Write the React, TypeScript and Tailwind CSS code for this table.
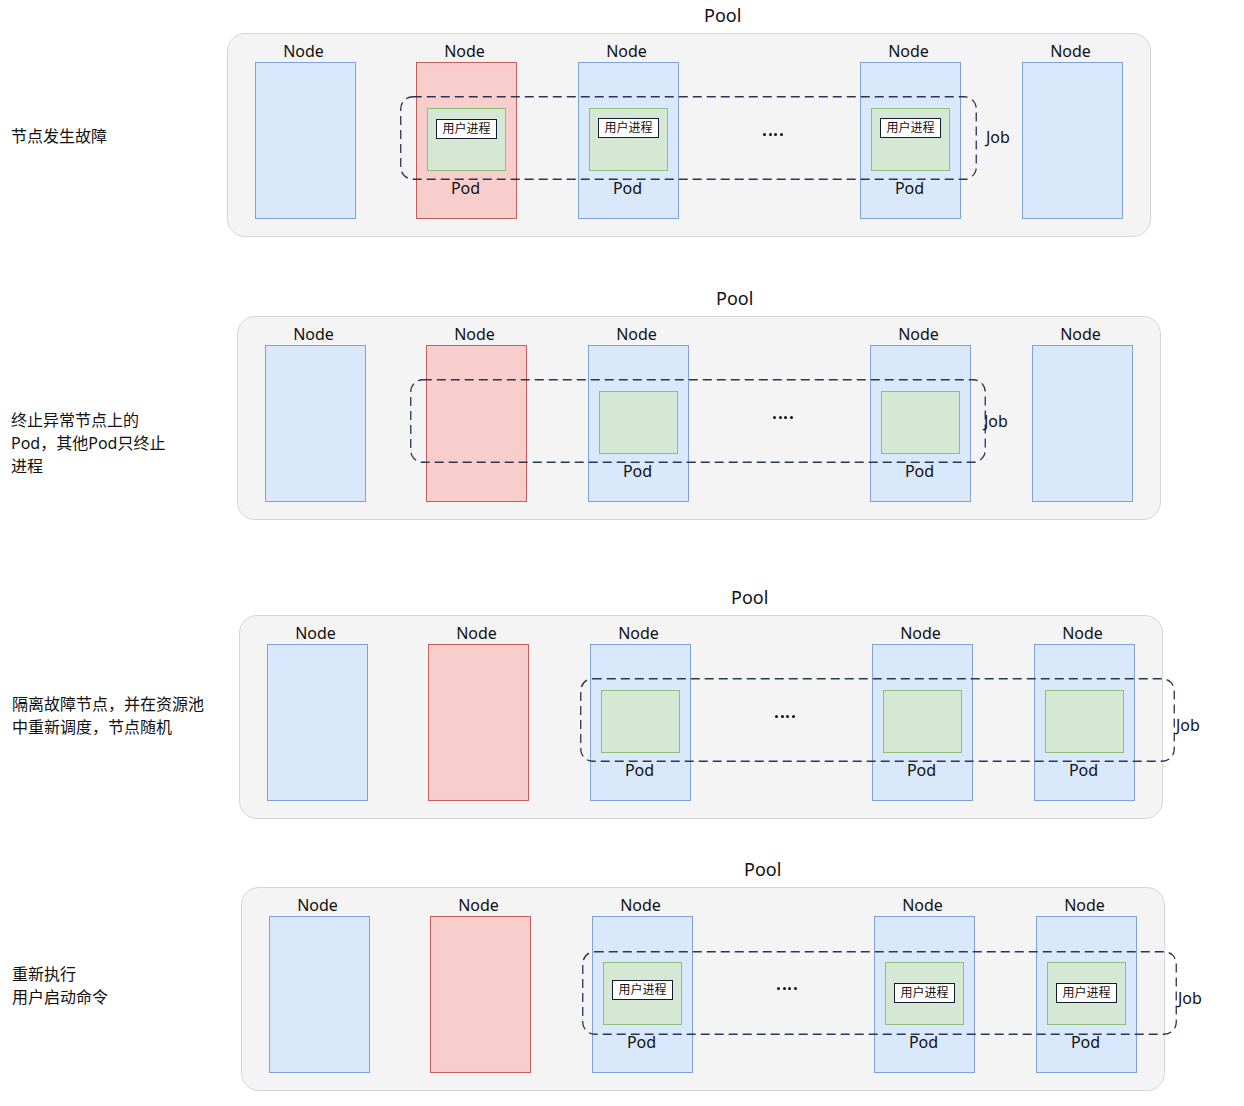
import React from "react";

type NodeSpec = {
  red?: boolean;
  pod?: boolean;
  procTop?: string;
};

type Section = {
  gap: string;
  labelCol: string;
  lines: string[];
  titlePad: string;
  nodes: NodeSpec[];
  job: string;
  jobLabel: string;
};

const nodeGaps = ["", "ml-[60px]", "ml-[61px]", "ml-[181px]", "ml-[61px]"];

const sections: Section[] = [
  {
    gap: "",
    labelCol: "w-[227px] pl-[11px] pt-[125px]",
    lines: ["节点发生故障"],
    titlePad: "pl-[477px]",
    nodes: [
      {},
      { red: true, pod: true, procTop: "mt-[10px]" },
      { pod: true, procTop: "mt-[9px]" },
      { pod: true, procTop: "mt-[9px]" },
      {},
    ],
    job: "left-[172px] top-[62px] w-[577px]",
    jobLabel: "left-[758px] top-[92px]",
  },
  {
    gap: "mt-[46px]",
    labelCol: "w-[237px] pl-[11px] pt-[126px]",
    lines: ["终止异常节点上的", "Pod，其他Pod只终止", "进程"],
    titlePad: "pl-[479px]",
    nodes: [{}, { red: true }, { pod: true }, { pod: true }, {}],
    job: "left-[172px] top-[62px] w-[576px]",
    jobLabel: "left-[746px] top-[93px]",
  },
  {
    gap: "mt-[62px]",
    labelCol: "w-[239px] pl-[12px] pt-[111px]",
    lines: ["隔离故障节点，并在资源池", "中重新调度，节点随机"],
    titlePad: "pl-[492px]",
    nodes: [{}, { red: true }, { pod: true }, { pod: true }, { pod: true }],
    job: "left-[340px] top-[62px] w-[595px]",
    jobLabel: "left-[936px] top-[98px]",
  },
  {
    gap: "mt-[35px]",
    labelCol: "w-[241px] pl-[12px] pt-[109px]",
    lines: ["重新执行", "用户启动命令"],
    titlePad: "pl-[503px]",
    nodes: [
      {},
      { red: true },
      { pod: true, procTop: "mt-[17px]" },
      { pod: true, procTop: "mt-[20px]" },
      { pod: true, procTop: "mt-[20px]" },
    ],
    job: "left-[340px] top-[63px] w-[595px]",
    jobLabel: "left-[936px] top-[99px]",
  },
];

const NodeBox = ({ spec, gap }: { spec: NodeSpec; gap: string }) => (
  <div className={`flex flex-col items-center w-[101px] ${gap}`}>
    <div className="h-[22px] leading-[22px] text-[16px] -translate-x-[2px]">Node</div>
    <div
      className={`w-[101px] h-[157px] border flex flex-col items-center ${
        spec.red ? "bg-[#f8cecc] border-[#c65f5b]" : "bg-[#dae8fc] border-[#80a2d6]"
      }`}
    >
      {spec.pod && (
        <>
          <div className="mt-[45px] w-[79px] h-[63px] bg-[#d5e8d4] border border-[#8fc079] flex flex-col items-center">
            {spec.procTop && (
              <div
                className={`${spec.procTop} w-[61px] h-[20px] bg-white border border-[#161a30] text-[12px] leading-[18px] text-center`}
              >
                用户进程
              </div>
            )}
          </div>
          <div className="mt-[6px] h-[22px] leading-[22px] text-[16px] -translate-x-[1px]">Pod</div>
        </>
      )}
    </div>
  </div>
);

const JobFrame = ({ cls }: { cls: string }) => (
  <svg className={`absolute h-[84px] ${cls}`} preserveAspectRatio="none">
    <rect
      x="0.75"
      y="0.75"
      width="calc(100% - 1.5px)"
      height="82.5"
      rx="12"
      fill="none"
      stroke="#2c3454"
      strokeWidth="1.3"
      strokeDasharray="9 5"
    />
  </svg>
);

const PoolSection = ({ s }: { s: Section }) => (
  <div className={`flex ${s.gap}`}>
    <div className={`${s.labelCol} shrink-0 text-[16px] leading-[23px]`}>
      {s.lines.map((l) => (
        <div key={l} className="whitespace-nowrap">
          {l}
        </div>
      ))}
    </div>
    <div className="flex flex-col">
      <div className={`h-[33px] pt-[4px] text-[18px] leading-[22px] ${s.titlePad}`}>Pool</div>
      <div className="relative w-[924px] h-[204px] bg-[#f4f4f4] border border-[#d6d6d6] rounded-[18px] pt-[6px] pl-[27px] flex">
        {s.nodes.map((n, i) => (
          <NodeBox key={i} spec={n} gap={nodeGaps[i]} />
        ))}
        <JobFrame cls={s.job} />
        <div className="absolute left-[535px] top-[99px] flex gap-[2.5px]">
          <span className="w-[3px] h-[3px] rounded-full bg-[#111]" />
          <span className="w-[3px] h-[3px] rounded-full bg-[#111]" />
          <span className="w-[3px] h-[3px] rounded-full bg-[#111]" />
          <span className="w-[3px] h-[3px] rounded-full bg-[#111]" />
        </div>
        <div className={`absolute text-[16px] leading-[22px] ${s.jobLabel}`}>Job</div>
      </div>
    </div>
  </div>
);

export default function App() {
  return (
    <div
      className="w-[1244px] h-[1106px] bg-white text-[#111] overflow-hidden"
      style={{ fontFamily: '"Noto Sans", "Noto Sans CJK SC", sans-serif' }}
    >
      {sections.map((s, i) => (
        <PoolSection key={i} s={s} />
      ))}
    </div>
  );
}
